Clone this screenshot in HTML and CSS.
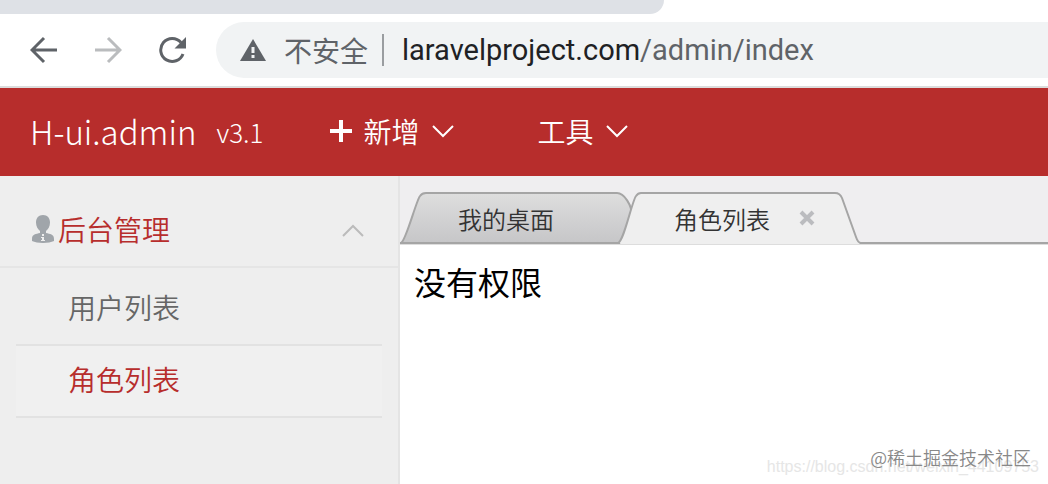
FILE: index.html
```html
<!doctype html>
<html lang="zh-CN">

<head>
    <meta charset="UTF-8" />
    <meta name="viewport" content="width=device-width, initial-scale=1.0" />
    <title>H-ui.admin v3.1</title>
    <link rel="stylesheet" href="styles.css">
</head>

<body>
    <!-- Browser chrome -->
    <div class="tab-strip"></div>
    <div class="toolbar">
        <button type="button" class="nav-button" aria-label="后退">
            <svg width="28" height="28" viewBox="0 0 28 28"><path d="M14 2 2 14l12 12M2 14h25" /></svg>
        </button>
        <button type="button" class="nav-button disabled" aria-label="前进">
            <svg width="28" height="28" viewBox="0 0 28 28"><path d="M14 2l12 12-12 12M26 14H1" /></svg>
        </button>
        <button type="button" class="nav-button" aria-label="刷新">
            <svg width="28" height="28" viewBox="0 0 28 28">
                <path d="M23 6.500A11.500 11.500 0 1 0 25 18" />
                <path class="solid" d="M28 1v11.500H16.500z" />
            </svg>
        </button>
        <div class="address-bar">
            <svg class="warning" width="26" height="22" viewBox="0 0 26 22">
                <path fill="#5f6368" d="M13 0 26 22H0z" />
                <path fill="#f1f3f4" d="M11.500 8h3v6h-3zM11.500 16h3v3h-3z" />
            </svg>
            <span class="security">不安全</span>
            <span class="url"><span class="host">laravelproject.com</span>/admin/index</span>
        </div>
    </div>

    <!-- Header -->
    <header class="navbar">
        <a class="logo" href="#">H-ui.admin</a>
        <span class="version">v3.1</span>
        <nav class="nav">
            <a class="nav-item" href="#">
                <svg class="plus" width="22" height="22" viewBox="0 0 22 22"><path d="M11 0v22M0 11h22" /></svg>
                新增
                <svg class="arrow" width="22" height="14" viewBox="0 0 22 14"><path d="M1 2l10 10L21 2" /></svg>
            </a>
            <a class="nav-item" href="#">
                工具
                <svg class="arrow" width="22" height="14" viewBox="0 0 22 14"><path d="M1 2l10 10L21 2" /></svg>
            </a>
        </nav>
    </header>

    <div class="main">
        <!-- Sidebar menu -->
        <aside class="sidebar">
            <button type="button" class="menu-title">
                <svg class="user" width="22" height="28" viewBox="0 0 22 28">
                    <path fill="#a0a5aa" d="M11 0c4.500 0 7 3 7 7.500 0 4-2 7-4 8.500v2c4 1 8 1 8 6v2c-5 2.500-17 2.500-22 0v-2c0-5 4-5 8-6v-2c-2-1.500-4-4.500-4-8.500C4 3 6.500 0 11 0z" />
                    <path fill="#eee" d="M10 19h2v2h-2zM9 22h3v3h1v1H9v-1h1v-2H9z" />
                </svg>
                <span>后台管理</span>
                <svg class="arrow" width="22" height="14" viewBox="0 0 22 14"><path d="M1 12 11 2l10 10" /></svg>
            </button>
            <ul class="menu-list">
                <li><a href="#">用户列表</a></li>
                <li class="current"><a href="#">角色列表</a></li>
            </ul>
        </aside>

        <!-- Tabs and page content -->
        <section class="content">
            <div class="tabs">
                <div class="tab">
                    <svg class="tab-shape" viewBox="0 0 232 52" preserveAspectRatio="none">
                        <defs>
                            <linearGradient id="tab-fill" x1="0" y1="0" x2="0" y2="1">
                                <stop offset="0" stop-color="#dedede" />
                                <stop offset="1" stop-color="#c6c6c8" />
                            </linearGradient>
                        </defs>
                        <path fill="url(#tab-fill)" d="M1 51C6 49 16 9 20 4q2-3 6-3h191c7 0 15 12 15 23l-12 27z" />
                    </svg>
                    <a href="#">我的桌面</a>
                </div>
                <div class="tab active">
                    <svg class="tab-shape" viewBox="0 0 240 52" preserveAspectRatio="none">
                        <path class="cover" fill="#efefef" d="M0 52 18 4h204l18 48z" />
                        <path fill="#efefef" d="M-2 51C4 49 12 9 16 4q2-3 5-3h194q5 0 7 5l14 39q2 6 5 6" />
                    </svg>
                    <a href="#">角色列表</a>
                    <button type="button" class="tab-close" aria-label="关闭">
                        <svg width="16" height="16" viewBox="0 0 16 16"><path d="M2 2l12 12M14 2 2 14" /></svg>
                    </button>
                </div>
            </div>
            <main class="page">
                <p class="message">没有权限</p>
                <span class="source">https://blog.csdn.net/weixin_44109753</span>
                <span class="community">@稀土掘金技术社区</span>
            </main>
        </section>
    </div>
</body>

</html>
```

FILE: styles.css
```css
* {
    box-sizing: border-box;
}

body {
    margin: 0;
    min-height: 100vh;
    display: flex;
    flex-direction: column;
    font-family: "Noto Sans CJK SC", sans-serif;
    font-weight: 350;
    font-size: 28px;
    background: #fff;
}

a {
    color: inherit;
    text-decoration: none;
}

button {
    border: none;
    padding: 0;
    background: none;
    font: inherit;
    color: inherit;
    cursor: pointer;
}

svg {
    display: block;
    flex: none;
    fill: none;
}

/* Browser chrome */
.tab-strip {
    width: 63.4%;
    height: 14px;
    background: #dee1e6;
    border-bottom-right-radius: 16px;
}

.toolbar {
    display: flex;
    align-items: center;
    gap: 36px;
    height: 74px;
    padding-left: 30px;
    border-bottom: 2px solid #dcdcdc;
}

.nav-button svg {
    stroke: #5f6368;
    stroke-width: 3;
}

.nav-button.disabled svg {
    stroke: #babcbe;
}

.nav-button .solid {
    fill: #5f6368;
    stroke: none;
}

.address-bar {
    flex: 1;
    display: flex;
    align-items: center;
    height: 56px;
    margin-left: -6px;
    padding-left: 24px;
    border-radius: 28px 0 0 28px;
    background: #f1f3f4;
    color: #5f6368;
    white-space: nowrap;
}

.security {
    margin-left: 18px;
    padding-right: 14px;
    border-right: 2px solid #9a9da0;
    font-weight: 400;
    line-height: 32px;
}

.url {
    margin-left: 18px;
    font-family: Roboto, sans-serif;
    font-size: 29px;
    font-weight: 400;
}

.host {
    color: #202124;
}

/* Header */
.navbar {
    display: flex;
    align-items: center;
    height: 88px;
    padding: 0 0 2px 30px;
    background: #b72d2c;
    color: #fff;
}

.logo {
    font-size: 33px;
    font-weight: 300;
}

.version {
    margin-left: 20px;
    font-size: 26px;
    font-weight: 300;
}

.nav {
    display: flex;
    gap: 84px;
    margin-left: 66px;
}

.nav-item {
    display: flex;
    align-items: center;
}

.plus {
    margin-right: 12px;
    stroke: #fff;
    stroke-width: 4;
}

.arrow {
    stroke: #fff;
    stroke-width: 2;
}

.nav-item .arrow {
    margin-left: 12px;
}

/* Sidebar */
.main {
    flex: 1;
    display: flex;
}

.sidebar {
    width: 400px;
    background: #eee;
    border-right: 2px solid #e4e4e4;
}

.menu-title {
    display: flex;
    align-items: center;
    width: 100%;
    height: 92px;
    padding: 16px 34px 0 32px;
    border-bottom: 2px solid #e5e5e5;
    color: #b72d2c;
}

.menu-title span {
    margin-left: 4px;
}

.menu-title .arrow {
    margin: 4px 0 0 auto;
    stroke: #bbb;
}

.menu-list {
    margin: 6px 16px 0;
    padding: 0;
    list-style: none;
}

.menu-list li {
    height: 72px;
    padding-left: 52px;
    border-bottom: 2px solid #e2e2e2;
    color: #666;
    line-height: 66px;
}

.menu-list .current {
    background: #f0f0f0;
    color: #b72d2c;
}

/* Tabs */
.content {
    flex: 1;
    display: flex;
    flex-direction: column;
}

.tabs {
    display: flex;
    height: 68px;
    padding-top: 16px;
    background: linear-gradient(#a5a5a5, #a5a5a5) 0 66px / 100% 2px no-repeat, #efeef0;
}

.tab {
    position: relative;
    display: flex;
    align-items: center;
    width: 220px;
    padding-left: 58px;
    color: #333;
    font-size: 24px;
}

.tab.active {
    width: 240px;
    padding-left: 54px;
}

.tab a,
.tab-close {
    position: relative;
}

.tab-shape {
    position: absolute;
    top: 0;
    left: 0;
    width: 232px;
    height: 52px;
    overflow: visible;
    stroke: #a5a5a5;
    stroke-width: 2;
}

.tab-shape .cover {
    stroke: none;
}

.tab.active .tab-shape {
    width: 240px;
}

.tab-close {
    margin-left: 29px;
}

.tab-close svg {
    stroke: #bbbcbf;
    stroke-width: 4;
}

/* Page */
.page {
    position: relative;
    flex: 1;
    border-top: 1px solid #ddd;
}

.message {
    margin: 13px 14px;
    font-size: 32px;
    font-weight: 400;
    line-height: 46px;
}

.source,
.community {
    position: absolute;
    white-space: nowrap;
}

.source {
    right: 9px;
    bottom: 8px;
    color: #e6e6e6;
    font: 16px "Liberation Sans", sans-serif;
}

.community {
    right: 17px;
    bottom: 14px;
    color: #888;
    font-size: 18px;
    line-height: 26px;
}
```
